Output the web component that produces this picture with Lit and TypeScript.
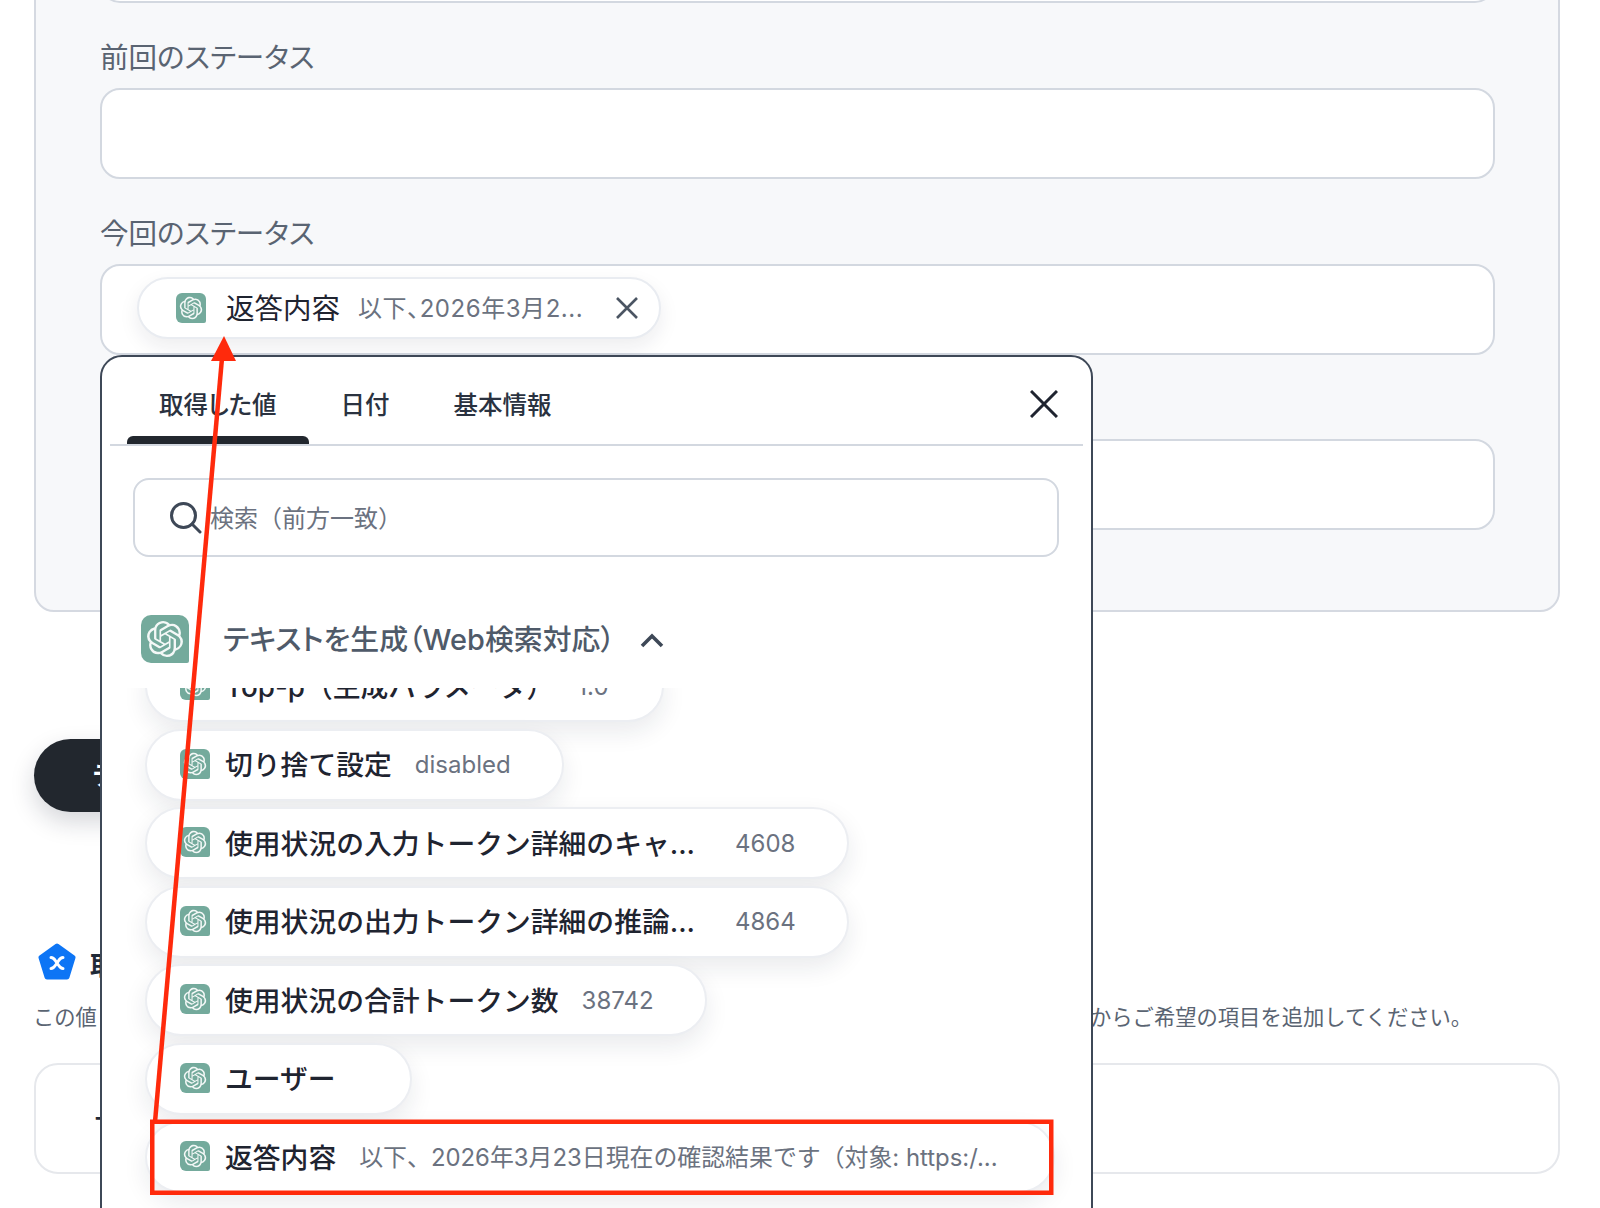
import { LitElement, html, css, svg } from "lit";
import { customElement } from "lit/decorators.js";

const LOGO = "M22.2819 9.8211a5.9847 5.9847 0 0 0-.5157-4.9108 6.0462 6.0462 0 0 0-6.5098-2.9A6.0651 6.0651 0 0 0 4.9807 4.1818a5.9847 5.9847 0 0 0-3.9977 2.9 6.0462 6.0462 0 0 0 .7427 7.0966 5.98 5.98 0 0 0 .511 4.9107 6.051 6.051 0 0 0 6.5146 2.9001A5.9847 5.9847 0 0 0 13.2599 24a6.0557 6.0557 0 0 0 5.7718-4.2058 5.9894 5.9894 0 0 0 3.9977-2.9001 6.0557 6.0557 0 0 0-.7475-7.0729zm-9.022 12.6081a4.4755 4.4755 0 0 1-2.8764-1.0408l.1419-.0804 4.7783-2.7582a.7948.7948 0 0 0 .3927-.6813v-6.7369l2.02 1.1686a.071.071 0 0 1 .038.052v5.5826a4.504 4.504 0 0 1-4.4945 4.4944zm-9.6607-4.1254a4.4708 4.4708 0 0 1-.5346-3.0137l.142.0852 4.783 2.7582a.7712.7712 0 0 0 .7806 0l5.8428-3.3685v2.3324a.0804.0804 0 0 1-.0332.0615L9.74 19.9502a4.4992 4.4992 0 0 1-6.1408-1.6464zM2.3408 7.8956a4.485 4.485 0 0 1 2.3655-1.9728V11.6a.7664.7664 0 0 0 .3879.6765l5.8144 3.3543-2.0201 1.1685a.0757.0757 0 0 1-.071 0l-4.8303-2.7865A4.504 4.504 0 0 1 2.3408 7.872zm16.5963 3.8558L13.1038 8.364 15.1192 7.2a.0757.0757 0 0 1 .071 0l4.8303 2.7913a4.4944 4.4944 0 0 1-.6765 8.1042v-5.6772a.79.79 0 0 0-.407-.667zm2.0107-3.0231l-.142-.0852-4.7735-2.7818a.7759.7759 0 0 0-.7854 0L9.409 9.2297V6.8974a.0662.0662 0 0 1 .0284-.0615l4.8303-2.7866a4.4992 4.4992 0 0 1 6.6802 4.66zM8.3065 12.863l-2.02-1.1638a.0804.0804 0 0 1-.038-.0567V6.0742a4.4992 4.4992 0 0 1 7.3757-3.4537l-.142.0805L8.704 5.459a.7948.7948 0 0 0-.3927.6813zm1.0976-2.3654l2.602-1.4998 2.6069 1.4998v2.9994l-2.5974 1.4997-2.6067-1.4997Z";

const logo = (cls: string) => html`<span class="tile ${cls}"><svg viewBox="-4 -4 32 32"><path fill="#fff" opacity=".92" d=${LOGO}></path></svg></span>`;

const rows = [
  { name: "Top-p（生成パラメータ）", value: "1.0", w: 519, clip: false, long: false },
  { name: "切り捨て設定", value: "disabled", w: 419, clip: false, long: false },
  { name: "使用状況の入力トークン詳細のキャ...", value: "4608", w: 704, clip: true, long: false },
  { name: "使用状況の出力トークン詳細の推論...", value: "4864", w: 704, clip: true, long: false },
  { name: "使用状況の合計トークン数", value: "38742", w: 562, clip: false, long: false },
  { name: "ユーザー", value: "", w: 267, clip: false, long: false },
  { name: "返答内容", value: "以下、2026年3月23日現在の確認結果です（対象: https:/...", w: 910, clip: false, long: true },
];

@customElement("app-root")
export class AppRoot extends LitElement {
  static styles = css`
    :host {
      display: block;
      position: relative;
      height: 1208px;
      overflow: hidden;
      background: #fff;
      font-family: Inter, "Noto Sans CJK JP", sans-serif;
      color: #1f2937;
    }
    .page { padding: 0 40px 0 34px; }
    .panel {
      margin-top: -40px;
      height: 652px;
      box-sizing: border-box;
      background: #f7f8fa;
      border: 2px solid #d5d9e1;
      border-radius: 20px;
      padding: 0 63px 0 64px;
    }
    .input {
      box-sizing: border-box;
      height: 91px;
      background: #fff;
      border: 2px solid #d3d8e0;
      border-radius: 20px;
      padding: 11px 0 0 35px;
    }
    .input.first { height: 41px; }
    .label {
      height: 35px;
      line-height: 35px;
      margin: 36.5px 0 13px;
      font-size: 28.5px;
      font-feature-settings: "palt";
      color: #5a6472;
    }
    .label.first { margin-top: 37px; }
    .chip {
      box-sizing: border-box;
      width: 524px;
      height: 62px;
      border: 2px solid #e9ecf1;
      border-radius: 31px;
      background: #fff;
      box-shadow: 0 8px 20px rgba(20, 30, 50, 0.08);
      display: flex;
      align-items: center;
      padding-left: 37px;
      font-feature-settings: "palt";
    }
    .tile {
      display: inline-flex;
      flex: none;
      background: #74aa9c;
      border-radius: 6px 6px 2px 6px;
    }
    .tile svg { width: 100%; height: 100%; display: block; }
    .t30 { width: 30px; height: 30px; }
    .t48 { width: 48px; height: 48px; border-radius: 10px 10px 2px 10px; }
    .chip .name { margin-left: 20px; font-size: 28.5px; color: #1f2430; padding-bottom: 3px; }
    .chip .val { margin-left: 18px; font-size: 24px; color: #6b7280; letter-spacing: 0.55px; width: 257px; white-space: nowrap; padding-bottom: 3px; }
    .chip svg.x { width: 24px; height: 24px; flex: none; }
    .cta {
      margin-top: 127px;
      width: 260px;
      height: 73px;
      box-sizing: border-box;
      padding-left: 58px;
      border-radius: 37px;
      background: #22272e;
      color: #fff;
      font-size: 26px;
      font-weight: 600;
      line-height: 73px;
      box-shadow: 0 10px 24px rgba(20, 30, 50, 0.18);
    }
    .heading {
      margin-top: 131px;
      display: flex;
      align-items: center;
      gap: 13px;
      height: 40px;
      font-size: 26px;
      font-weight: 600;
      color: #1f2937;
    }
    .heading svg { width: 40px; height: 40px; margin-left: 3px; flex: none; }
    .desc {
      margin-top: 18px;
      display: flex;
      height: 32px;
      line-height: 32px;
      font-size: 21.3px;
      color: #5a6472;
      white-space: nowrap;
    }
    .desc .lead { width: 1057px; flex: none; margin-left: -1px; }
    .box {
      margin-top: 30px;
      box-sizing: border-box;
      height: 111px;
      border: 2px solid #e6e8ec;
      border-radius: 24px;
      padding-left: 56px;
      line-height: 107px;
      font-size: 26px;
      font-weight: 600;
    }
    .popup {
      position: absolute;
      left: 100px;
      top: 355px;
      width: 993px;
      height: 900px;
      box-sizing: border-box;
      background: #fff;
      border: 2px solid #3e4857;
      border-radius: 22px;
      padding: 0 8px;
    }
    .tabs {
      display: flex;
      align-items: flex-end;
      height: 87px;
      padding-left: 17px;
      border-bottom: 2px solid #d3d8e0;
      position: relative;
    }
    .tab {
      height: 87px;
      box-sizing: border-box;
      padding: 31px 32px 0;
      font-size: 24.5px;
      font-weight: 500;
      line-height: 34px;
      font-feature-settings: "palt";
      color: #2a3240;
      position: relative;
    }
    .tab.on::after {
      content: "";
      position: absolute;
      left: 0;
      right: 0;
      bottom: 0;
      height: 8px;
      border-radius: 6px 6px 0 0;
      background: #22272e;
    }
    .close { position: absolute; right: 25px; top: 33px; width: 28px; height: 28px; }
    .search {
      margin: 32px 24px 0 23px;
      box-sizing: border-box;
      height: 79px;
      border: 2px solid #d3d8e0;
      border-radius: 16px;
      display: flex;
      align-items: center;
      padding-left: 34px;
      font-size: 24px;
      color: #6b7280;
      gap: 8px;
    }
    .search svg { width: 33px; height: 33px; flex: none; }
    .search span { padding-bottom: 3px; }
    .group {
      margin: 58px 0 0 31px;
      height: 73px;
      display: flex;
      gap: 34px;
      align-items: flex-start;
    }
    .group .title { font-size: 28.9px; font-weight: 500; line-height: 50px; color: #4f5a69; white-space: nowrap; font-feature-settings: "palt"; }
    .group svg.chev { width: 26px; height: 16px; margin: 17px 0 0 -10px; flex: none; }
    .list {
      height: 520px;
      overflow: hidden;
      margin: 0 -8px;
      padding-left: 43px;
      display: flex;
      flex-direction: column;
      gap: 6.57px;
    }
    .row {
      box-sizing: border-box;
      flex: none;
      height: 72px;
      border: 2px solid #eceef2;
      border-radius: 36px;
      background: #fff;
      box-shadow: 0 10px 24px rgba(20, 30, 50, 0.09);
      display: flex;
      align-items: center;
      padding-left: 33px;
      white-space: nowrap;
    }
    .row:first-child { margin-top: -38px; }
    .row .tile { margin-bottom: 2px; }
    .row .name { margin-left: 15px; font-size: 27.8px; font-weight: 500; color: #1f2430; padding-bottom: 3px; }
    .row .name.clip { width: 485px; flex: none; }
    .row .val { margin-left: 23px; font-size: 24px; color: #6b7280; }
    .row .val.long { font-size: 23.9px; padding-bottom: 4px; }
    .row .name.clip + .val { margin-left: 25px; }
    .notes { position: absolute; left: 0; top: 0; pointer-events: none; }
  `;

  render() {
    return html`
      <div class="page">
        <section class="panel">
          <div class="input first"></div>
          <div class="label first">前回のステータス</div>
          <div class="input"></div>
          <div class="label">今回のステータス</div>
          <div class="input">
            <div class="chip">
              ${logo("t30")}
              <span class="name">返答内容</span>
              <span class="val">以下、2026年3月2...</span>
              <svg class="x" viewBox="0 0 24 24" fill="none" stroke="#4b5563" stroke-width="2.6"><path d="M2 2l20 20M22 2L2 22"></path></svg>
            </div>
          </div>
          <div class="label"></div>
          <div class="input"></div>
        </section>
        <div class="cta">テスト</div>
        <div class="heading">
          <svg viewBox="0 0 40 40">
            <path d="M20 3L36 14.5L30 34H10L4 14.5Z" fill="#0d75f5" stroke="#0d75f5" stroke-width="5" stroke-linejoin="round"></path>
            <path d="M14 14.5c3 0 3.5 2 6 5.5s3 5.5 6 5.5M26 14.5c-3 0-3.5 2-6 5.5s-3 5.5-6 5.5" fill="none" stroke="#fff" stroke-width="3" stroke-linecap="round"></path>
          </svg>
          <span>取得</span>
        </div>
        <div class="desc"><span class="lead">この値</span><span>からご希望の項目を追加してください。</span></div>
        <div class="box">＋</div>
      </div>

      <div class="popup">
        <div class="tabs">
          <div class="tab on">取得した値</div>
          <div class="tab">日付</div>
          <div class="tab">基本情報</div>
          <svg class="close" viewBox="0 0 28 28" fill="none" stroke="#1f2430" stroke-width="3"><path d="M1 1l26 26M27 1L1 27"></path></svg>
        </div>
        <div class="search">
          <svg viewBox="0 0 33 33" fill="none" stroke="#3e4857" stroke-width="3"><circle cx="14.5" cy="14.5" r="12"></circle><path d="M23 23l8 8" stroke-linecap="round"></path></svg>
          <span>検索（前方一致）</span>
        </div>
        <div class="group">
          ${logo("t48")}
          <span class="title">テキストを生成（Web検索対応）</span>
          <svg class="chev" viewBox="0 0 26 16" fill="none" stroke="#3e4857" stroke-width="3.6"><path d="M3 14L13 4l10 10"></path></svg>
        </div>
        <div class="list">
          ${rows.map(
            (r) => html`<div class="row" style="width:${r.w}px">
              ${logo("t30")}
              <span class="name ${r.clip ? "clip" : ""}">${r.name}</span>
              ${r.value ? html`<span class="val ${r.long ? "long" : ""}">${r.value}</span>` : ""}
            </div>`
          )}
        </div>
      </div>

      <svg class="notes" width="1600" height="1208" viewBox="0 0 1600 1208">
        ${svg`
          <path d="M155 1122L222 358" stroke="#ff2a0c" stroke-width="4.5" fill="none"></path>
          <path d="M224 336L236 361H211Z" fill="#ff2a0c"></path>
          <rect x="152.25" y="1121.75" width="899" height="71" fill="none" stroke="#ff2a0c" stroke-width="4.5"></rect>
        `}
      </svg>
    `;
  }
}
